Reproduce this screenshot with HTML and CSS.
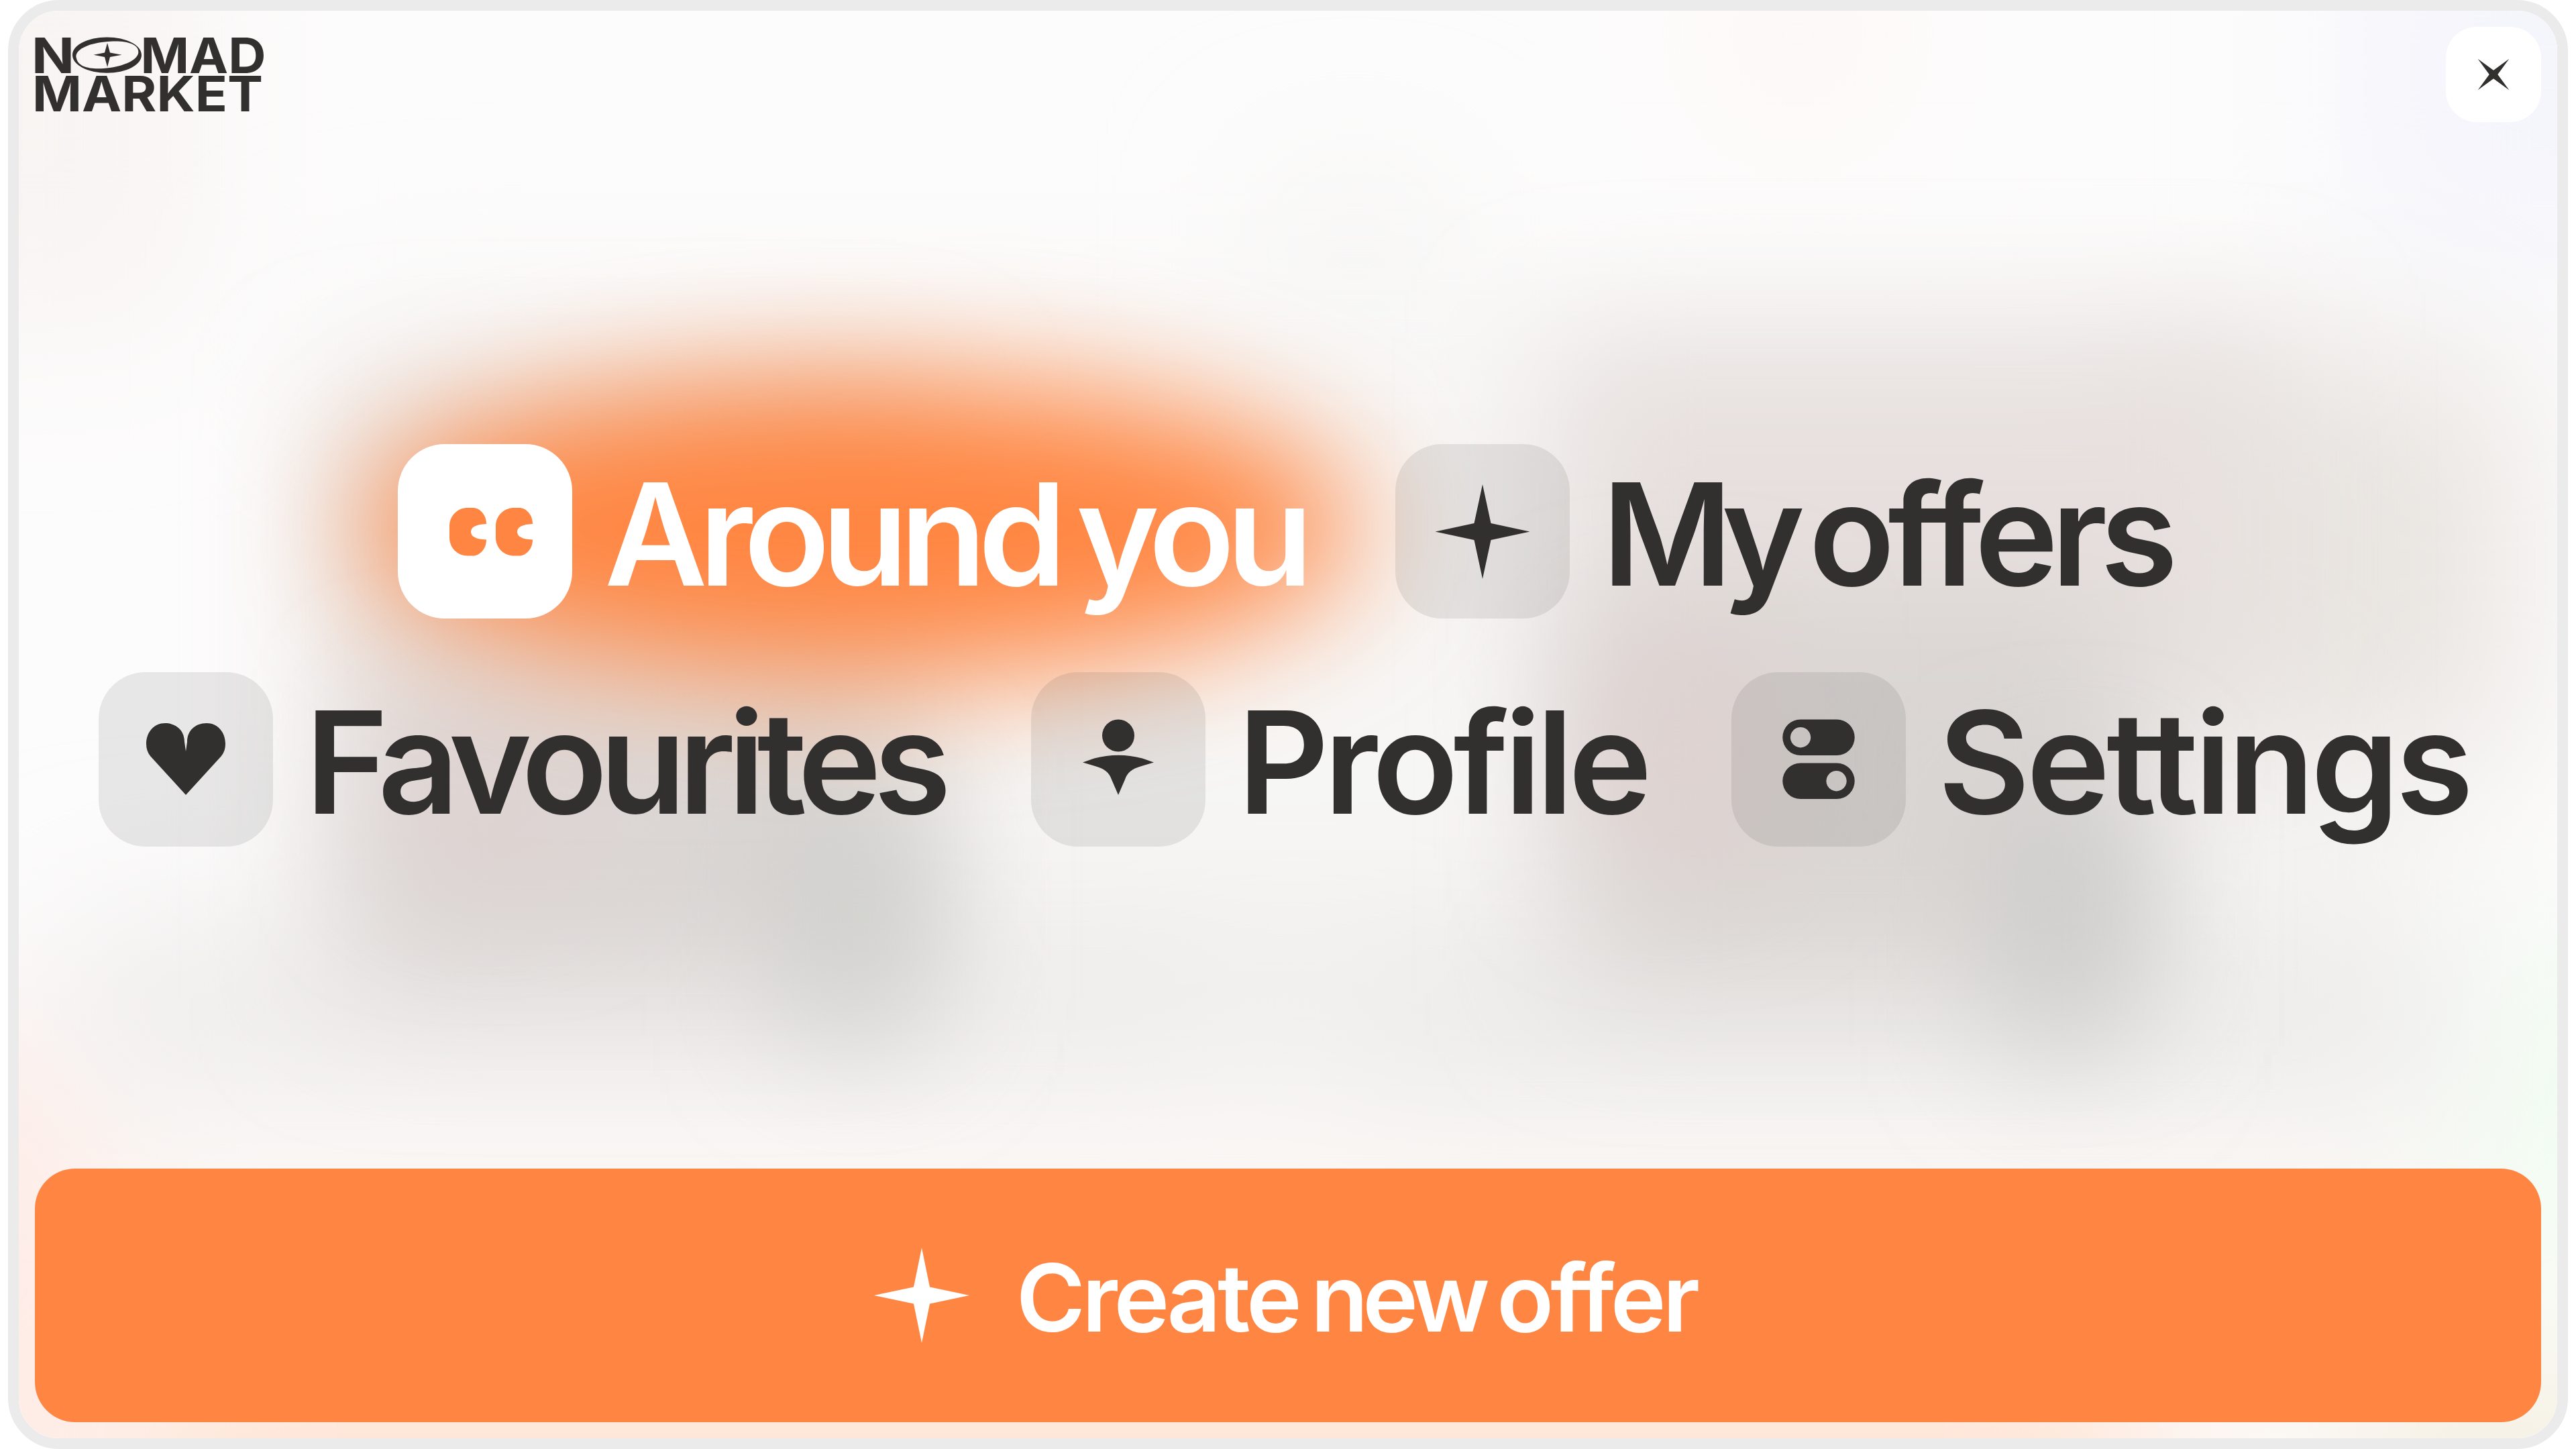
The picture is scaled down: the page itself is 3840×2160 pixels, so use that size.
FILE: index.html
```html
<!DOCTYPE html>
<html lang="en">
<head>
<meta charset="UTF-8" />
<meta name="viewport" content="width=device-width, initial-scale=1" />
<title>Nomad Market</title>
<link rel="stylesheet" href="styles.css">
</head>
<body>

  <div class="screen">
    <!-- blurred page behind the menu -->
    <svg class="backdrop" viewBox="28 16 3784 2128" preserveAspectRatio="none" aria-hidden="true">
      <defs>
        <filter id="soft" x="-80%" y="-80%" width="260%" height="260%"><feGaussianBlur stdDeviation="98" /></filter>
        <filter id="softer" x="-80%" y="-80%" width="260%" height="260%"><feGaussianBlur stdDeviation="120" /></filter>
      </defs>
      <rect x="0" y="0" width="3840" height="2160" fill="#fdfcfc" />
      <g filter="url(#softer)">
        <rect x="-200" y="-200" width="500" height="700" fill="#f8f4f3" />
        <rect x="3500" y="-200" width="600" height="600" fill="#f5f5fc" />
        <rect x="2560" y="-100" width="240" height="300" fill="#fdf6f5" />
        <rect x="-200" y="1550" width="320" height="800" fill="#ffe9e3" />
        <rect x="100" y="1700" width="3500" height="400" fill="#fdf6f2" />
        <rect x="200" y="2060" width="3000" height="400" fill="#ffe2d0" />
        <rect x="3660" y="1400" width="500" height="500" fill="#f2fdf2" />
        <rect x="3500" y="2040" width="500" height="300" fill="#f4efe0" />
        <rect x="1900" y="280" width="240" height="160" fill="#f2f2f0" />
      </g>
      <g filter="url(#softer)">
        <rect x="480" y="440" width="3160" height="1060" fill="#f7f6f5" />
        <rect x="100" y="1380" width="1800" height="240" fill="#eceae9" />
        <rect x="1960" y="1380" width="1700" height="270" fill="#ebeae8" />
        <rect x="3200" y="540" width="560" height="600" fill="#e9e5e1" />
      </g>
      <g filter="url(#soft)">
        <rect x="500" y="590" width="880" height="900" fill="#e5dfdc" />
        <rect x="2310" y="500" width="1090" height="550" fill="#e7e0de" />
        <rect x="2340" y="880" width="850" height="600" fill="#dad6d3" />
        <rect x="530" y="1080" width="800" height="380" fill="#dad5d3" />
      </g>
      <g filter="url(#soft)">
        <rect x="2370" y="960" width="260" height="320" fill="#dfd2d0" />
        <rect x="590" y="1060" width="260" height="240" fill="#dfd3d1" />
        <rect x="1190" y="1180" width="180" height="360" fill="#cccecb" />
        <rect x="2990" y="1180" width="180" height="380" fill="#cacbc9" />
      </g>
    </svg>

    <header class="topbar">
      <svg class="logo" viewBox="0 0 344 112" role="img" aria-label="Nomad Market">
        <text x="-5" y="53.5" textLength="64" lengthAdjust="spacingAndGlyphs">N</text>
        <path fill-rule="evenodd" d="M107.500 0.500C136 0.500 159 12 159 27S136 53.700 107.500 53.700 56 42 56 27 79 0.500 107.500 0.500ZM62 32C58 20 78 10 104 7.500 134 4 152 10 154 20 157 32 138 42 112 46 85 49.500 65 46 62 32Z" />
        <path d="M108 9 112 23.500 129.500 26.700 112 30 108 45 104 30 87.500 26.700 104 23.500Z" />
        <text x="157.500" y="53.500" textLength="187" lengthAdjust="spacingAndGlyphs">MAD</text>
        <text x="-4" y="111" textLength="344" lengthAdjust="spacingAndGlyphs">MARKET</text>
      </svg>
      <button class="close" aria-label="Close">
        <svg viewBox="-24 -24 48 48"><path d="M-23.300-23.300 0-6.300 23.300-23.300 6.300 0 23.300 23.300 0 6.300-23.300 23.300-6.300 0Z" /></svg>
      </button>
    </header>

    <nav class="menu">
      <div class="menu-row">
        <a class="item item-around active" href="#">
          <span class="tile">
            <svg viewBox="0 0 260 260">
              <path d="M104 95h8c10 0 20 10 20 24q-23 1-23 11.800t23 11.700c0 14-10 24-20 24h-8c-15 0-27-12-27-27v-17.500c0-15 12-27 27-27Z" />
              <path d="M173 95h8c10 0 20 10 20 24q-23 1-23 11.800t23 11.700c0 14-10 24-20 24h-8c-15 0-27-12-27-27v-17.500c0-15 12-27 27-27Z" />
            </svg>
          </span>
          <span class="label">Around you</span>
        </a>
        <a class="item item-offers" href="#">
          <span class="tile">
            <svg viewBox="0 0 260 260"><path d="M130 60 142.500 118 200.500 130.500 142.500 143 130 201 117.500 143 59.500 130.500 117.500 118Z" /></svg>
          </span>
          <span class="label"><span class="tight">My</span> offers</span>
        </a>
      </div>
      <div class="menu-row">
        <a class="item item-favourites" href="#">
          <span class="tile">
            <svg viewBox="0 0 260 260"><path d="M130 183 77 125C73 120 71 114 71 107 71 89 83 76 99 76 116 76 128 87 128 104L130 118 132 104C132 87 144 76 161 76 177 76 189 89 189 107 189 114 187 120 183 125Z" /></svg>
          </span>
          <span class="label">Favourites</span>
        </a>
        <a class="item item-profile" href="#">
          <span class="tile">
            <svg viewBox="0 0 260 260">
              <circle cx="130" cy="94.500" r="24" />
              <path d="M77 134.500 94 128.500C118 122 142 122 166 128.500L183 134.500 163 140.500C151 144 143 150 140 160L130 183 120 160C117 150 109 144 97 140.500Z" />
            </svg>
          </span>
          <span class="label">Profile</span>
        </a>
        <a class="item item-settings" href="#">
          <span class="tile">
            <svg viewBox="0 0 260 260">
              <path fill-rule="evenodd" d="M103 70.500h54a26.700 26.700 0 0 1 0 53.500h-54a26.700 26.700 0 0 1 0-53.500ZM103 82a15.200 15.200 0 1 0 .1 0Z" />
              <path fill-rule="evenodd" d="M103 135.500h54a26.700 26.700 0 0 1 0 53.500h-54a26.700 26.700 0 0 1 0-53.500ZM156.500 147a15.200 15.200 0 1 0 .1 0Z" />
            </svg>
          </span>
          <span class="label">Settings</span>
        </a>
      </div>
    </nav>

    <button class="create">
      <svg viewBox="0 0 142 142"><path d="M71 0 83 58.500 142 71 83 83.500 71 142 59 83.500 0 71 59 58.500Z" /></svg>
      <span class="create-text">Create <span class="tight">new</span> offer</span>
    </button>
  </div>

</body>
</html>
```
FILE: styles.css
```css
* {
  box-sizing: border-box;
}

body, html {
  margin: 0;
  padding: 0;
  height: 100%;
  background: #fff;
  font-family: Inter, "Liberation Sans", sans-serif;
  color: #32302e;
}

button {
  border: none;
  padding: 0;
  font-family: inherit;
  cursor: pointer;
}

.screen {
  position: relative;
  display: flex;
  flex-direction: column;
  height: 2160px;
  margin: 0 12px;
  padding: 24px;
  border: 16px solid #ebebeb;
  border-radius: 76px;
  overflow: hidden;
}

.backdrop {
  position: absolute;
  inset: 0;
  width: 100%;
  height: 100%;
}

.topbar {
  position: relative;
  display: flex;
  justify-content: space-between;
  align-items: center;
  height: 142px;
}

.logo {
  width: 344px;
  height: 112px;
  overflow: visible;
  fill: #32302e;
  font-size: 73.5px;
  font-weight: 700;
}

.close {
  display: flex;
  align-items: center;
  justify-content: center;
  width: 142px;
  height: 142px;
  border-radius: 46px;
  background: #fff;
}
.close svg {
  width: 48px;
  height: 48px;
  fill: #32302e;
}

.menu {
  position: relative;
  flex: 1;
  display: flex;
  flex-direction: column;
  gap: 80px;
  padding-top: 480px;
}

.menu-row {
  display: flex;
  justify-content: center;
  gap: 128px;
  height: 260px;
}

.item {
  position: relative;
  display: flex;
  align-items: flex-start;
  gap: 48px;
  color: inherit;
  text-decoration: none;
}
.item-around { width: 1359px; }
.item-offers { width: 1167px; }
.item-favourites { width: 1262px; }
.item-profile { width: 916px; }
.item-settings { width: 1112px; }

/* glow under the selected item */
.active::before {
  content: "";
  position: absolute;
  left: -50px;
  top: -98px;
  width: 1480px;
  height: 442px;
  border-radius: 50%;
  background: #ff8642;
  filter: blur(94px);
}

.tile {
  position: relative;
  flex: none;
  width: 260px;
  height: 260px;
  border-radius: 70px;
  background: rgba(50, 48, 46, 0.1);
}
.tile svg {
  display: block;
  fill: #32302e;
}
.active .tile {
  background: #fff;
}
.active .tile svg {
  fill: #ff8642;
}

.label {
  position: relative;
  padding-top: 5px;
  font-size: 211px;
  line-height: 260px;
  font-weight: 560;
  white-space: nowrap;
}
.active .label {
  color: #fff;
}
.item-around .label {
  letter-spacing: -0.059em;
  word-spacing: -0.065em;
}
.item-offers .label {
  letter-spacing: -0.05em;
  word-spacing: -0.09em;
}
.item-offers .tight {
  letter-spacing: -0.085em;
}
.item-favourites .label { letter-spacing: -0.056em; }
.item-profile .label { letter-spacing: -0.035em; }
.item-settings .label { letter-spacing: -0.026em; }

.create {
  position: relative;
  display: flex;
  align-items: center;
  justify-content: center;
  gap: 70px;
  height: 378px;
  padding-right: 8px;
  border-radius: 60px;
  background: #ff8642;
  color: #fff;
  font-size: 140px;
  font-weight: 560;
  letter-spacing: -0.036em;
  word-spacing: -0.085em;
}
.create svg {
  width: 142px;
  height: 142px;
  fill: #fff;
}
.create-text {
  padding-top: 5px;
}
.create .tight {
  letter-spacing: -0.06em;
}
```
